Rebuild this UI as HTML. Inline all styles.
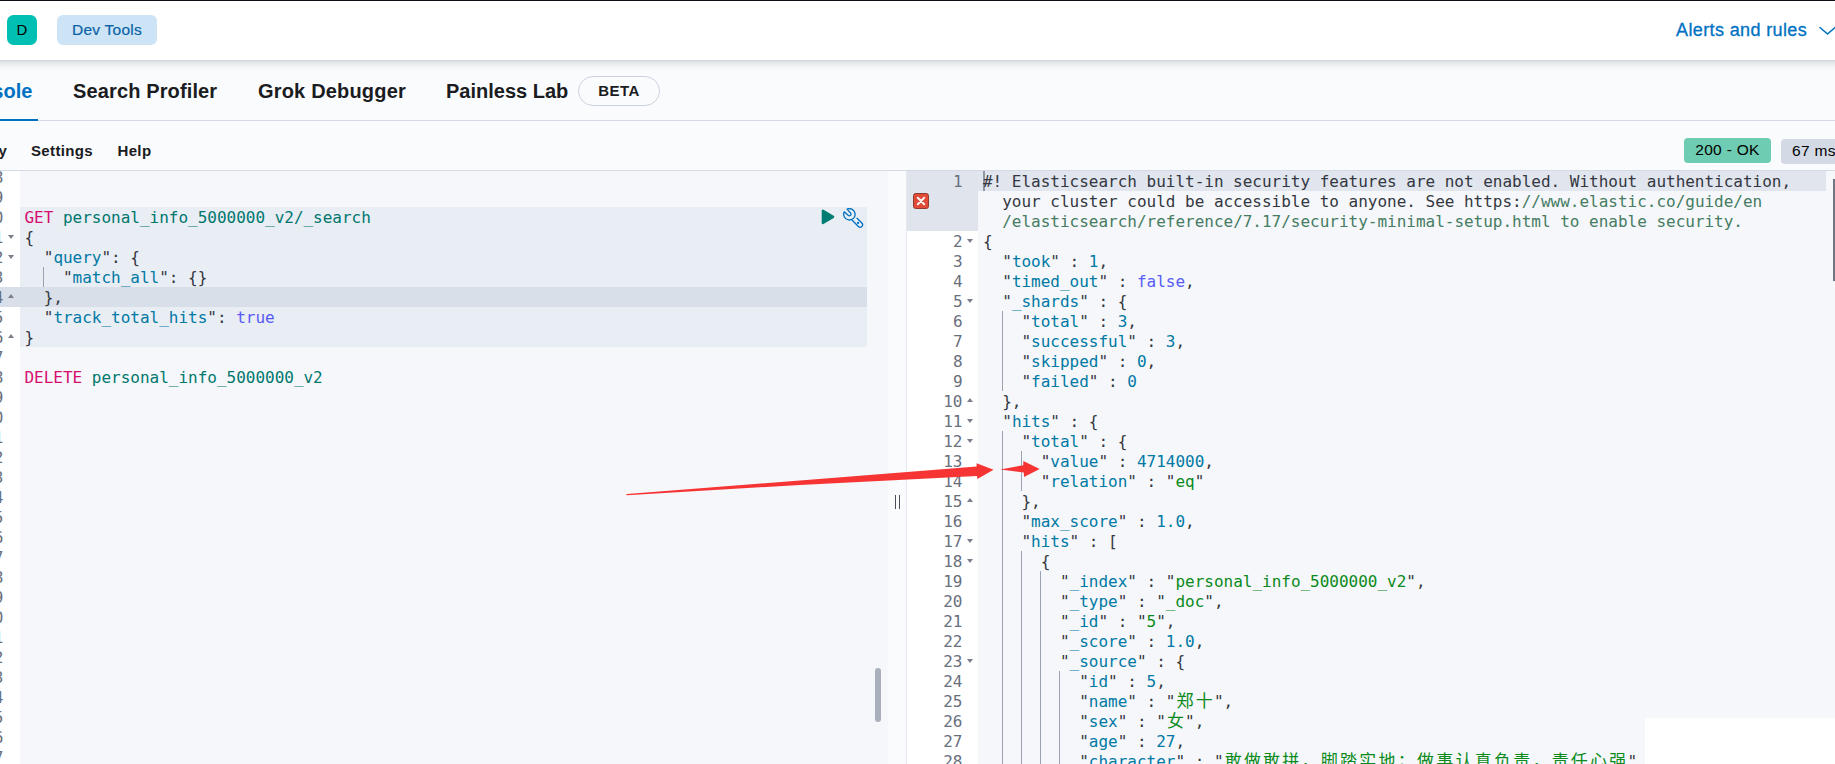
<!DOCTYPE html>
<html lang="en">
<head>
<meta charset="utf-8">
<title>Dev Tools - Console</title>
<style>
*{box-sizing:border-box;margin:0;padding:0}
html,body{width:1835px;height:764px;overflow:hidden;background:#fafbfd}
body{position:relative;font-family:"Liberation Sans","Noto Sans CJK SC",sans-serif;color:#1a1c21}
.abs{position:absolute}
#topline{position:absolute;left:0;top:0;width:1835px;height:1px;background:#0e0f17}
#header{position:absolute;left:0;top:1px;width:1835px;height:59px;background:#fff}
#hline{position:absolute;left:0;top:60px;width:1835px;height:1px;background:#cdd3e0}
#hshadow{position:absolute;left:0;top:61px;width:1835px;height:11px;background:linear-gradient(to bottom,rgba(70,72,80,.16),rgba(70,72,80,.07) 35%,rgba(70,72,80,.02) 70%,rgba(70,72,80,0))}
#avatar{position:absolute;left:7px;top:14px;width:30px;height:30px;border-radius:6.5px;background:#00bfb3;color:#000;font-size:15px;line-height:30px;text-align:center}
#crumb{-webkit-text-stroke:.2px #0a62a6;position:absolute;left:57px;top:14px;width:100px;height:30px;border-radius:6px;background:#cce4f5;color:#0a62a6;font-size:15.5px;letter-spacing:.25px;line-height:30px;text-align:center}
#alerts{-webkit-text-stroke:.3px #0071c2;position:absolute;left:1676px;top:17px;font-size:18px;letter-spacing:.375px;line-height:24px;color:#0071c2;white-space:nowrap}
#chev{position:absolute;left:1818px;top:24px}
#tabs{position:absolute;left:0;top:61px;width:1835px;height:60px;border-bottom:1px solid #d3dae6}
.tab{position:absolute;top:18px;font-size:20px;line-height:24px;font-weight:bold;color:#1a1c21;white-space:nowrap}
#tabsel{position:absolute;left:0;top:57.6px;width:38px;height:2.4px;background:#0071c2}
#beta{position:absolute;left:578px;top:15px;width:82px;height:30px;border:1px solid #cbd2e0;border-radius:15px;font-size:15px;font-weight:bold;letter-spacing:.45px;line-height:27px;text-align:center;color:#1a1c21}
#toolbar{position:absolute;left:0;top:121px;width:1835px;height:50px;border-bottom:1px solid #d3dae6}
.tb{position:absolute;top:20px;letter-spacing:.35px;font-size:15px;line-height:20px;font-weight:bold;color:#1a1c21;white-space:nowrap}
.badge{position:absolute;height:25px;border-radius:4px;font-size:15.5px;letter-spacing:.3px;line-height:23px;color:#000;white-space:nowrap;text-align:center}
/* editors */
.mono{font-family:"DejaVu Sans Mono","Liberation Mono","Noto Sans CJK SC",monospace;font-size:16px;letter-spacing:-0.013px}
#left{position:absolute;left:0;top:171px;width:888px;height:593px;background:#f5f7fa;overflow:hidden}
#lgut{position:absolute;left:0;top:0;width:20px;height:593px;background:#fff}
#right{position:absolute;left:906px;top:171px;width:929px;height:593px;background:#f5f7fa;overflow:hidden;border-left:1px solid #e6e9f0}
#rgut{position:absolute;left:0;top:0;width:71px;height:593px;background:#fff}
.ln{position:absolute;height:20px;line-height:22px;white-space:pre;color:#343741}
.gl{position:absolute;height:20px;line-height:22px;text-align:right;color:#69707d;white-space:pre}
#left .ln{left:24.5px}
#left .gl{left:-40px;width:43.5px}
#right .ln{left:76px}
#right .gl{left:0;width:55.5px}
.fd,.fu{position:absolute;width:0;height:0;border-left:3.6px solid transparent;border-right:3.6px solid transparent}
.fd{border-top:4px solid #7a7f89;margin-top:8px}
.fu{border-bottom:4px solid #7a7f89;margin-top:7px}
#left .fd,#left .fu{left:8px}
#right .fd,#right .fu{left:59.5px}
.ig{position:absolute;width:1px;background:#9aa2b1}
.cj{display:inline-block;width:19.24px;text-align:center;font-size:17px;letter-spacing:0;line-height:0}
.v,.n{color:#0079a5}
.s{color:#0b8a1b}
.b{color:#585cf6}
.c{color:#457c62}
.m{color:#d60d70}
.u{color:#00776e}
.hl{position:absolute;background:#e9edf4}
.al{position:absolute;background:#d9dfe9}
</style>
</head>
<body>
<div id="topline"></div>
<div id="tabs">
  <div class="tab" style="left:-47px;color:#0071c2;letter-spacing:.1px">Console</div>
  <div class="tab" style="left:73px;letter-spacing:.13px">Search Profiler</div>
  <div class="tab" style="left:258px;letter-spacing:.18px">Grok Debugger</div>
  <div class="tab" style="left:446px">Painless Lab</div>
  <div id="beta">BETA</div>
  <div id="tabsel"></div>
</div>
<div id="hline"></div><div id="hshadow"></div>
<div id="header">
  <div id="avatar">D</div>
  <div id="crumb">Dev Tools</div>
  <div id="alerts">Alerts and rules</div>
  <svg id="chev" width="18" height="12" viewBox="0 0 18 12"><path d="M2 2.5 L9.5 9 L17 2.5" fill="none" stroke="#0071c2" stroke-width="1.6" stroke-linecap="round" stroke-linejoin="round"/></svg>
</div>
<div id="toolbar">
  <div class="tb" style="left:-47px">History</div>
  <div class="tb" style="left:31px">Settings</div>
  <div class="tb" style="left:117.5px">Help</div>
  <div class="badge" style="left:1684px;top:17px;width:87px;background:#6dccb1">200 - OK</div>
  <div class="badge" style="left:1781px;top:18px;width:70px;background:#d3dae6;text-align:left;padding-left:11px">67 ms</div>
</div>

<div id="left" class="mono">
  <div id="lgut"></div>
  <div class="hl" style="left:20px;top:36px;width:847px;height:140px"></div>
  <div class="al" style="left:0;top:116px;width:867px;height:20px"></div>
<div class="gl" style="top:-4px">108</div>
<div class="gl" style="top:16px">109</div>
<div class="gl" style="top:36px">110</div>
<div class="gl" style="top:56px">111</div>
<div class="gl" style="top:76px">112</div>
<div class="gl" style="top:96px">113</div>
<div class="gl" style="top:116px">114</div>
<div class="gl" style="top:136px">115</div>
<div class="gl" style="top:156px">116</div>
<div class="gl" style="top:176px">117</div>
<div class="gl" style="top:196px">118</div>
<div class="gl" style="top:216px">119</div>
<div class="gl" style="top:236px">120</div>
<div class="gl" style="top:256px">121</div>
<div class="gl" style="top:276px">122</div>
<div class="gl" style="top:296px">123</div>
<div class="gl" style="top:316px">124</div>
<div class="gl" style="top:336px">125</div>
<div class="gl" style="top:356px">126</div>
<div class="gl" style="top:376px">127</div>
<div class="gl" style="top:396px">128</div>
<div class="gl" style="top:416px">129</div>
<div class="gl" style="top:436px">130</div>
<div class="gl" style="top:456px">131</div>
<div class="gl" style="top:476px">132</div>
<div class="gl" style="top:496px">133</div>
<div class="gl" style="top:516px">134</div>
<div class="gl" style="top:536px">135</div>
<div class="gl" style="top:556px">136</div>
<div class="gl" style="top:576px">137</div>
<i class="fd" style="top:56px"></i>
<i class="fd" style="top:76px"></i>
<i class="fu" style="top:116px"></i>
<i class="fu" style="top:156px"></i>
  <i class="ig" style="left:43.2px;top:96px;height:20px"></i>
<div class="ln" style="top:36px"><span class="m">GET</span> <span class="u">personal_info_5000000_v2/_search</span></div>
<div class="ln" style="top:56px">{</div>
<div class="ln" style="top:76px">  "<span class="v">query</span>": {</div>
<div class="ln" style="top:96px">    "<span class="v">match_all</span>": {}</div>
<div class="ln" style="top:116px">  },</div>
<div class="ln" style="top:136px">  "<span class="v">track_total_hits</span>": <span class="b">true</span></div>
<div class="ln" style="top:156px">}</div>
<div class="ln" style="top:196px"><span class="m">DELETE</span> <span class="u">personal_info_5000000_v2</span></div>
  <svg class="abs" style="left:821px;top:38px" width="14" height="16" viewBox="0 0 14 16"><polygon points="1.9,1.7 12.1,7.85 1.9,14" fill="#017d73" stroke="#017d73" stroke-width="2.4" stroke-linejoin="round"/></svg>
  <svg class="abs" style="left:843px;top:37px" width="21" height="21" viewBox="0 0 21 21" fill="none" stroke="#0071c2" stroke-width="1.3" stroke-linecap="round" stroke-linejoin="round">
    <path d="M4.07 1.1 L7.55 5.05 Q8.5 6.3 7.5 7.3 Q6.3 8.3 5.1 7.35 L1.26 3.85 A5.7 5.7 0 1 0 4.07 1.1 Z"/>
    <path d="M8.54 11.58 L15.37 18.53 A2.44 2.44 0 0 0 18.83 15.07 L14.1 10.25"/>
    <circle cx="15.1" cy="14.9" r="0.55" fill="#0071c2" stroke-width="1.1"/>
  </svg>
  <div class="abs" style="left:875px;top:497px;width:6px;height:54px;border-radius:3px;background:#a9afbb"></div>
</div>

<div class="abs" style="left:894.5px;top:495px;width:1px;height:14px;background:#4a4f59"></div>
<div class="abs" style="left:898.5px;top:495px;width:1px;height:14px;background:#4a4f59"></div>

<div id="right" class="mono">
  <div id="rgut"></div>
  <div class="al" style="left:0;top:0;width:71px;height:60px;background:#dfe4ed"></div>
  <div class="al" style="left:71px;top:0;width:848px;height:20px;background:#e0e5ee"></div>
  <div class="abs" style="left:75.5px;top:0;width:2px;height:20px;background:#8e95a3"></div>
  <svg class="abs" style="left:5.8px;top:21.5px" width="16" height="16" viewBox="0 0 16 16"><rect x="0.5" y="0.5" width="15" height="15" rx="2.2" fill="#e04a36" stroke="#8f3b30" stroke-width="1"/><path d="M4.8 4.8 L11.2 11.2 M11.2 4.8 L4.8 11.2" stroke="#fff4f2" stroke-width="2" stroke-linecap="round"/></svg>
<i class="ig" style="left:94.54px;top:140px;height:80px"></i>
<i class="ig" style="left:94.54px;top:260px;height:340px"></i>
<i class="ig" style="left:113.78px;top:280px;height:40px"></i>
<i class="ig" style="left:113.78px;top:380px;height:220px"></i>
<i class="ig" style="left:133.02px;top:400px;height:200px"></i>
<i class="ig" style="left:152.26px;top:500px;height:100px"></i>
<div class="gl" style="top:0px">1</div>
<div class="ln" style="top:0px">#! Elasticsearch built-in security features are not enabled. Without authentication,</div>
<div class="ln" style="top:20px">  your cluster could be accessible to anyone. See https:<span class="c">//www.elastic.co/guide/en</span></div>
<div class="ln" style="top:40px">  <span class="c">/elasticsearch/reference/7.17/security-minimal-setup.html to enable security.</span></div>
<div class="gl" style="top:60px">2</div>
<i class="fd" style="top:60px"></i>
<div class="ln" style="top:60px">{</div>
<div class="gl" style="top:80px">3</div>
<div class="ln" style="top:80px">  "<span class="v">took</span>" : <span class="n">1</span>,</div>
<div class="gl" style="top:100px">4</div>
<div class="ln" style="top:100px">  "<span class="v">timed_out</span>" : <span class="b">false</span>,</div>
<div class="gl" style="top:120px">5</div>
<i class="fd" style="top:120px"></i>
<div class="ln" style="top:120px">  "<span class="v">_shards</span>" : {</div>
<div class="gl" style="top:140px">6</div>
<div class="ln" style="top:140px">    "<span class="v">total</span>" : <span class="n">3</span>,</div>
<div class="gl" style="top:160px">7</div>
<div class="ln" style="top:160px">    "<span class="v">successful</span>" : <span class="n">3</span>,</div>
<div class="gl" style="top:180px">8</div>
<div class="ln" style="top:180px">    "<span class="v">skipped</span>" : <span class="n">0</span>,</div>
<div class="gl" style="top:200px">9</div>
<div class="ln" style="top:200px">    "<span class="v">failed</span>" : <span class="n">0</span></div>
<div class="gl" style="top:220px">10</div>
<i class="fu" style="top:220px"></i>
<div class="ln" style="top:220px">  },</div>
<div class="gl" style="top:240px">11</div>
<i class="fd" style="top:240px"></i>
<div class="ln" style="top:240px">  "<span class="v">hits</span>" : {</div>
<div class="gl" style="top:260px">12</div>
<i class="fd" style="top:260px"></i>
<div class="ln" style="top:260px">    "<span class="v">total</span>" : {</div>
<div class="gl" style="top:280px">13</div>
<div class="ln" style="top:280px">      "<span class="v">value</span>" : <span class="n">4714000</span>,</div>
<div class="gl" style="top:300px">14</div>
<div class="ln" style="top:300px">      "<span class="v">relation</span>" : "<span class="s">eq</span>"</div>
<div class="gl" style="top:320px">15</div>
<i class="fu" style="top:320px"></i>
<div class="ln" style="top:320px">    },</div>
<div class="gl" style="top:340px">16</div>
<div class="ln" style="top:340px">    "<span class="v">max_score</span>" : <span class="n">1.0</span>,</div>
<div class="gl" style="top:360px">17</div>
<i class="fd" style="top:360px"></i>
<div class="ln" style="top:360px">    "<span class="v">hits</span>" : [</div>
<div class="gl" style="top:380px">18</div>
<i class="fd" style="top:380px"></i>
<div class="ln" style="top:380px">      {</div>
<div class="gl" style="top:400px">19</div>
<div class="ln" style="top:400px">        "<span class="v">_index</span>" : "<span class="s">personal_info_5000000_v2</span>",</div>
<div class="gl" style="top:420px">20</div>
<div class="ln" style="top:420px">        "<span class="v">_type</span>" : "<span class="s">_doc</span>",</div>
<div class="gl" style="top:440px">21</div>
<div class="ln" style="top:440px">        "<span class="v">_id</span>" : "<span class="s">5</span>",</div>
<div class="gl" style="top:460px">22</div>
<div class="ln" style="top:460px">        "<span class="v">_score</span>" : <span class="n">1.0</span>,</div>
<div class="gl" style="top:480px">23</div>
<i class="fd" style="top:480px"></i>
<div class="ln" style="top:480px">        "<span class="v">_source</span>" : {</div>
<div class="gl" style="top:500px">24</div>
<div class="ln" style="top:500px">          "<span class="v">id</span>" : <span class="n">5</span>,</div>
<div class="gl" style="top:520px">25</div>
<div class="ln" style="top:520px">          "<span class="v">name</span>" : "<span class="s"><span class="cj">郑</span><span class="cj">十</span></span>",</div>
<div class="gl" style="top:540px">26</div>
<div class="ln" style="top:540px">          "<span class="v">sex</span>" : "<span class="s"><span class="cj">女</span></span>",</div>
<div class="gl" style="top:560px">27</div>
<div class="ln" style="top:560px">          "<span class="v">age</span>" : <span class="n">27</span>,</div>
<div class="gl" style="top:580px">28</div>
<div class="ln" style="top:580px">          "<span class="v">character</span>" : "<span class="s"><span class="cj">敢</span><span class="cj">做</span><span class="cj">敢</span><span class="cj">拼</span><span class="cj">，</span><span class="cj">脚</span><span class="cj">踏</span><span class="cj">实</span><span class="cj">地</span><span class="cj">；</span><span class="cj">做</span><span class="cj">事</span><span class="cj">认</span><span class="cj">真</span><span class="cj">负</span><span class="cj">责</span><span class="cj">，</span><span class="cj">责</span><span class="cj">任</span><span class="cj">心</span><span class="cj">强</span></span>",</div>
  <div class="abs" style="left:926px;top:8px;width:2px;height:102px;background:#6f7684"></div>
</div>

<svg class="abs" style="left:0;top:0" width="1835" height="764" viewBox="0 0 1835 764">
  <polygon points="626,494.6 627,494 800,480.5 976.6,466.6 976.6,463.2 993.6,469.8 977.3,479 977,476.1 800,484.9 627,495.2" fill="#f73434"/>
  <polygon points="1000.1,469.5 1023.3,465.2 1023.3,461 1039.7,468.9 1024,477 1023.8,472.6" fill="#f73434"/>
</svg>
<div class="abs" style="left:1645px;top:718px;width:190px;height:46px;background:#fff"></div>
</body>
</html>
